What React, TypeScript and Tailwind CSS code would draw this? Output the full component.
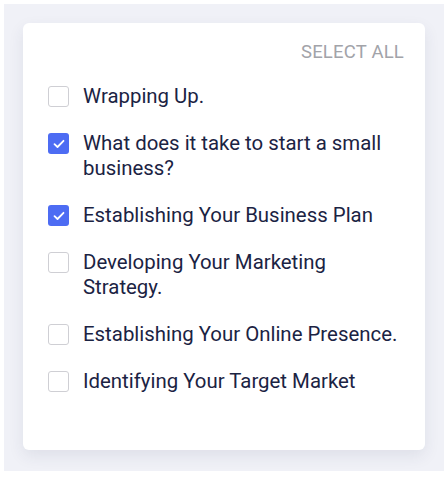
const items = [
  { label: "Wrapping Up.", checked: false },
  { label: "What does it take to start a small business?", checked: true },
  { label: "Establishing Your Business Plan", checked: true },
  { label: "Developing Your Marketing Strategy.", checked: false },
  { label: "Establishing Your Online Presence.", checked: false },
  { label: "Identifying Your Target Market", checked: false },
];

function Checkbox({ checked }: { checked: boolean }) {
  if (checked) {
    return (
      <span className="mt-[2px] flex h-[21px] w-[21px] shrink-0 items-center justify-center rounded-[3px] bg-[#4d6cf3]">
        <svg width="12" height="10" viewBox="0 0 12 10" fill="none">
          <path d="M1.5 5.2 4.5 8 10.5 1.8" stroke="white" strokeWidth="1.8" strokeLinecap="round" strokeLinejoin="round" />
        </svg>
      </span>
    );
  }
  return <span className="mt-[2px] h-[21px] w-[21px] shrink-0 rounded-[3px] border border-[#cfcfd4] bg-white" />;
}

export default function App() {
  return (
    <div className="h-[477px] w-[448px] bg-white p-[4px]" style={{ fontFamily: "Roboto, 'Liberation Sans', sans-serif" }}>
      <div className="h-[467px] w-[440px] bg-[#f0f1f7] p-[19px]">
        <div className="h-[427px] w-[402px] rounded-[6px] bg-white pl-[25px] pr-[21px] pt-[18px] shadow-[0_6px_16px_rgba(40,50,90,0.09)]">
          <div className="flex justify-end">
            <button className="text-[18.5px] leading-[22px] tracking-[0.2px] text-[#a2a3a9]">SELECT ALL</button>
          </div>
          <ul className="mt-[21px] flex flex-col gap-[22px]">
            {items.map((item) => (
              <li key={item.label} className="flex items-start gap-[14px] pr-[3px]">
                <Checkbox checked={item.checked} />
                <span className="text-[20.4px] leading-[25px] text-[#1b2343]">{item.label}</span>
              </li>
            ))}
          </ul>
        </div>
      </div>
    </div>
  );
}
